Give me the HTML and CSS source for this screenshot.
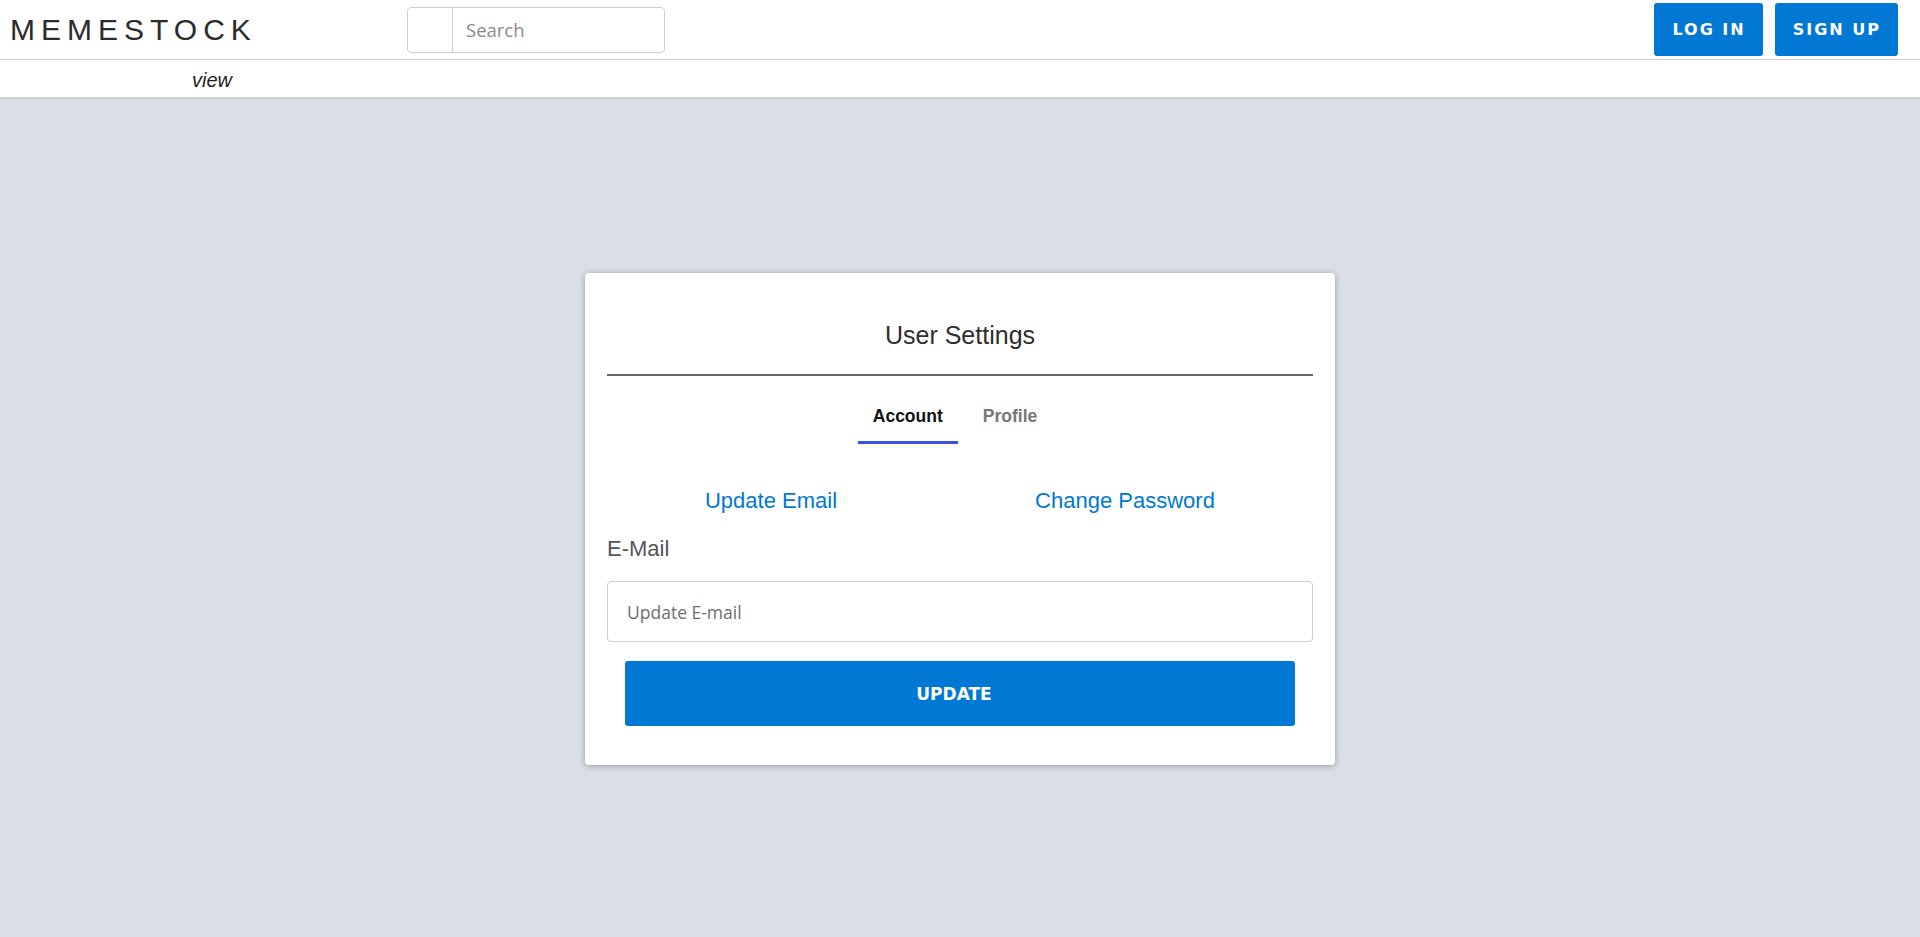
FILE: index.html
```html
<!DOCTYPE html>
<html>
<head>
<meta charset="utf-8">
<link rel="stylesheet" href="styles.css">
</head>
<body>
<header class="topbar">
  <div class="brand">MEMESTOCK</div>
  <div class="search">
    <span class="search-addon"></span>
    <input class="search-input" type="text" placeholder="Search">
  </div>
  <div class="spacer"></div>
  <div class="auth">
    <button class="btn-top">LOG IN</button>
    <button class="btn-top">SIGN UP</button>
  </div>
</header>
<nav class="subbar"><span class="view">view</span></nav>
<main class="main">
  <section class="card">
    <h2 class="card-title">User Settings</h2>
    <div class="divider"></div>
    <div class="tabs">
      <div class="tab active">Account</div>
      <div class="tab">Profile</div>
    </div>
    <div class="links">
      <a class="link">Update Email</a>
      <a class="link">Change Password</a>
    </div>
    <label class="field-label">E-Mail</label>
    <input class="field-input" type="text" placeholder="Update E-mail">
    <button class="btn-update">UPDATE</button>
  </section>
</main>
</body>
</html>
```
FILE: styles.css
```css
* { box-sizing: border-box; }
html, body { margin: 0; padding: 0; }
body {
  font-family: "Liberation Sans", Arial, sans-serif;
  background: #dadee6;
  height: 937px;
  overflow: hidden;
}
.topbar {
  height: 60px;
  background: #fff;
  border-bottom: 1px solid #cfcfcf;
  display: flex;
  align-items: center;
  padding: 0 22px 0 10px;
}
.brand {
  font-family: "Liberation Sans", Arial, sans-serif;
  font-size: 30px;
  letter-spacing: 6px;
  color: #2b2b2b;
  width: 397px;
}
.search {
  display: flex;
  width: 258px;
  height: 46px;
  border: 1px solid #cfcfcf;
  border-radius: 4px;
}
.search-addon {
  width: 45px;
  border-right: 1px solid #cfcfcf;
}
.search-input {
  flex: 1;
  border: none;
  outline: none;
  padding: 0 0 0 13px;
  font-family: "Open Sans", sans-serif;
  font-size: 18.5px;
  color: #333;
  background: transparent;
  min-width: 0;
}
.search-input::placeholder { color: #8a8a8a; }
.spacer { flex: 1; }
.auth { display: flex; gap: 12px; }
.btn-top {
  height: 53px;
  border: none;
  border-radius: 3px;
  background: #0078d4;
  color: #fff;
  font-family: "DejaVu Sans", Verdana, sans-serif;
  font-weight: bold;
  font-size: 16px;
  letter-spacing: 2px;
  padding: 0 17px 0 18px;
}
.subbar {
  height: 38px;
  background: #fff;
  border-bottom: 1px solid #cfcfcf;
  box-shadow: 0 1px 1px rgba(0,0,0,0.08);
  display: flex;
  align-items: center;
  padding: 4px 0 0 192px;
}
.view {
  font-style: italic;
  font-size: 20px;
  color: #222;
}
.main {
  height: 839px;
  padding-top: 3px;
  display: flex;
  align-items: center;
  justify-content: center;
}
.card {
  width: 750px;
  background: #fff;
  border-radius: 4px;
  box-shadow: 0 1px 6px rgba(0,0,0,0.3);
  padding: 22px 22px 39px;
  display: flex;
  flex-direction: column;
}
.card-title {
  margin: 25px 0 24px;
  text-align: center;
  font-weight: normal;
  font-size: 25px;
  line-height: 30px;
  color: #2e2e2e;
}
.divider {
  height: 2px;
  background: #666;
}
.tabs {
  display: flex;
  justify-content: center;
  gap: 10px;
  margin-top: 18px;
  padding-right: 10px;
}
.tab {
  font-weight: bold;
  font-size: 17.5px;
  line-height: 20px;
  color: #777;
  padding: 12px 15px 15px;
  border-bottom: 3px solid transparent;
}
.tab.active {
  color: #111;
  border-bottom-color: #3f4ee8;
}
.links {
  display: grid;
  grid-template-columns: 354px 354px;
  justify-content: center;
  margin: 44px 0 0 -24px;
}
.link {
  text-align: center;
  color: #0078d4;
  font-size: 22px;
  line-height: 26px;
  cursor: pointer;
}
.field-label {
  margin-top: 22px;
  font-size: 22px;
  line-height: 26px;
  color: #555;
}
.field-input {
  margin-top: 19px;
  height: 61px;
  border: 1px solid #cfcfcf;
  border-radius: 4px;
  padding: 0 19px;
  font-family: "Open Sans", sans-serif;
  font-size: 17.5px;
  color: #333;
  outline: none;
}
.field-input::placeholder { color: #6e6e6e; }
.btn-update {
  margin: 19px 18px 0;
  height: 65px;
  border: none;
  border-radius: 3px;
  background: #0078d4;
  color: #fff;
  font-family: "DejaVu Sans", Verdana, sans-serif;
  font-weight: bold;
  font-size: 17px;
  padding: 0 12px 0 0;
}
```
